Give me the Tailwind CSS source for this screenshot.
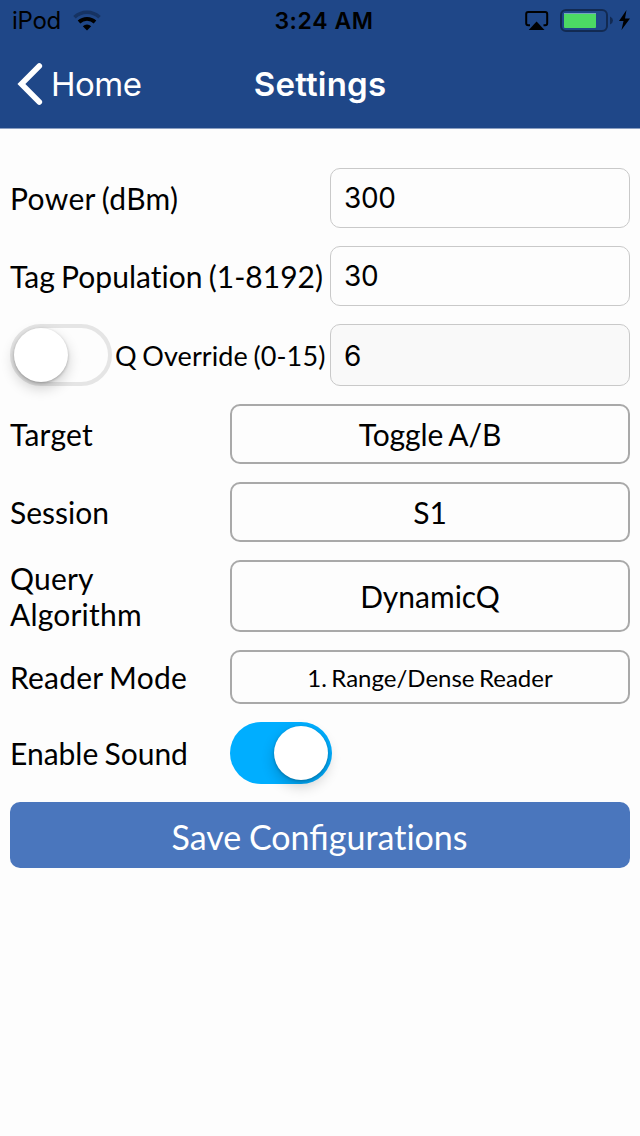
<!DOCTYPE html>
<html lang="en">
<head>
<meta charset="utf-8">
<title>Settings</title>
<script src="https://cdn.jsdelivr.net/npm/@tailwindcss/browser@4"></script>
</head>
<body class="bg-[#fdfdfd] text-black font-['Lato',sans-serif]">
<div class="w-[640px] h-[1136px] overflow-hidden flex flex-col">
  <header class="h-[129px] bg-[#1f4788] border-b border-[#8b9fc1] font-['Inter',sans-serif] shrink-0">
    <div class="h-10 grid grid-cols-3 items-center">
      <div class="flex items-center pl-3 gap-[13px]">
        <span class="text-[24px] leading-[38px] pt-0.5 w-[48px] tracking-[-0.3px] whitespace-nowrap">iPod</span>
        <svg width="28" height="21" viewBox="0 0 28 21" fill="none" stroke="#000">
          <path d="M1.5 7.3A18 18 0 0 1 26.5 7.3" stroke="#163363" stroke-width="3.6"/>
          <path d="M6 12A11.8 11.8 0 0 1 22 12" stroke-width="3.8"/>
          <path d="M14 20.5L9.8 16.2A6.2 6.2 0 0 1 18.2 16.2Z" fill="#000" stroke="none"/>
        </svg>
      </div>
      <div class="text-center text-[23px] leading-[38px] pt-0.5 font-semibold tracking-[0.6px] whitespace-nowrap pl-[8px]">3:24 AM</div>
      <svg class="justify-self-end" width="115" height="40" viewBox="525 0 115 40" fill="none">
        <path d="M530 25.3H528.2A2 2 0 0 1 526.2 23.3V14A2 2 0 0 1 528.2 12H545.2A2 2 0 0 1 547.2 14V23.3A2 2 0 0 1 545.2 25.3H543.5" stroke="#000" stroke-width="2"/>
        <path d="M536.6 21.5L544.5 30H528.7Z" fill="#000"/>
        <rect x="561" y="10" width="46" height="21" rx="5" stroke="#122a52" stroke-width="2"/>
        <rect x="564" y="13" width="32" height="15" rx="1" fill="#4cd964"/>
        <path d="M564 13.5H596" stroke="#76a4c0"/>
        <path d="M610 16.5Q613 18 613 20.5T610 24.5Z" fill="#122a52"/>
        <path d="M626.5 10L619 21H623.5L621.5 30L630 18.5H625Z" fill="#000"/>
      </svg>
    </div>
    <div class="h-[88px] grid grid-cols-3 items-center text-white">
      <div class="flex items-center pl-[17px] gap-[8px]">
        <svg width="26" height="42" viewBox="0 0 26 42" fill="none" stroke="#fff" stroke-width="5.6" stroke-linecap="round" stroke-linejoin="miter"><path d="M22.3 3L4.4 21L22.3 39"/></svg>
        <span class="text-[33px] leading-[40px] tracking-[-0.5px]">Home</span>
      </div>
      <div class="text-center text-[33px] leading-[40px] font-semibold tracking-[0.2px]">Settings</div>
    </div>
  </header>

  <main class="px-[10px] pt-[39px] flex flex-col gap-[18px] text-[30px] leading-9">
    <div class="h-[60px] flex items-center">
      <label class="w-80 whitespace-nowrap tracking-[0.35px] [word-spacing:-1.5px]">Power (dBm)</label>
      <div class="flex-1 h-full border border-[#c9c9c9] rounded-[10px] px-[13px] flex items-center font-['Inter',sans-serif] text-[28px] tracking-[-0.3px]">300</div>
    </div>
    <div class="h-[60px] flex items-center">
      <label class="w-80 whitespace-nowrap tracking-[0.02px] [word-spacing:-1.5px]">Tag Populat&zwnj;ion (1-8192)</label>
      <div class="flex-1 h-full border border-[#c9c9c9] rounded-[10px] px-[13px] flex items-center font-['Inter',sans-serif] text-[28px] tracking-[-0.3px]">30</div>
    </div>
    <div class="h-[62px] flex items-center">
      <div class="w-[102px] h-[62px] shrink-0 rounded-full border-4 border-[#e5e5e5]">
        <div class="size-[54px] rounded-full bg-white shadow-[0_6px_14px_rgba(0,0,0,0.2),0_1px_3px_rgba(0,0,0,0.25)]"></div>
      </div>
      <label class="w-[218px] pl-[3px] whitespace-nowrap text-[27px] pt-0.5 tracking-[0.1px] [word-spacing:-1.5px]">Q Override (0-15)</label>
      <div class="flex-1 h-full border border-[#c9c9c9] bg-[#f9f9f9] rounded-[10px] px-[13px] flex items-center font-['Inter',sans-serif] text-[28px] pt-0.5">6</div>
    </div>
    <div class="h-[60px] flex items-center">
      <label class="w-[220px] tracking-[0.2px]">Target</label>
      <div class="flex-1 h-full border-2 border-[#a9a9a9] rounded-[10px] flex items-center justify-center tracking-[-0.1px] [word-spacing:-1.5px]">Toggle A/B</div>
    </div>
    <div class="h-[60px] flex items-center">
      <label class="w-[220px]">Session</label>
      <div class="flex-1 h-full border-2 border-[#a9a9a9] rounded-[10px] flex items-center justify-center">S1</div>
    </div>
    <div class="h-[72px] flex items-center">
      <label class="w-[220px] tracking-[0.2px]">Query<br>Algorithm</label>
      <div class="flex-1 h-full border-2 border-[#a9a9a9] rounded-[10px] flex items-center justify-center">DynamicQ</div>
    </div>
    <div class="h-[54px] flex items-center">
      <label class="w-[220px] tracking-[0.2px] [word-spacing:-1.5px]">Reader Mode</label>
      <div class="flex-1 h-full border-2 border-[#a9a9a9] rounded-[10px] flex items-center justify-center text-[24px] pt-0.5 [word-spacing:-1.7px]">1. Range/Dense Reader</div>
    </div>
    <div class="h-[62px] flex items-center">
      <label class="w-[220px] [word-spacing:-1.5px]">Enable Sound</label>
      <div class="w-[102px] h-[62px] rounded-full bg-[#00aeff] p-1 flex justify-end">
        <div class="size-[54px] rounded-full bg-white shadow-[0_6px_14px_rgba(0,0,0,0.2),0_1px_3px_rgba(0,0,0,0.25)]"></div>
      </div>
    </div>
    <div class="h-[66px] rounded-[10px] bg-[#4a76bd] text-white text-[34px] leading-[40px] flex items-center justify-center pt-[3px] pr-px [word-spacing:-1px]">Save Configurat&zwnj;ions</div>
  </main>
</div>
</body>
</html>
